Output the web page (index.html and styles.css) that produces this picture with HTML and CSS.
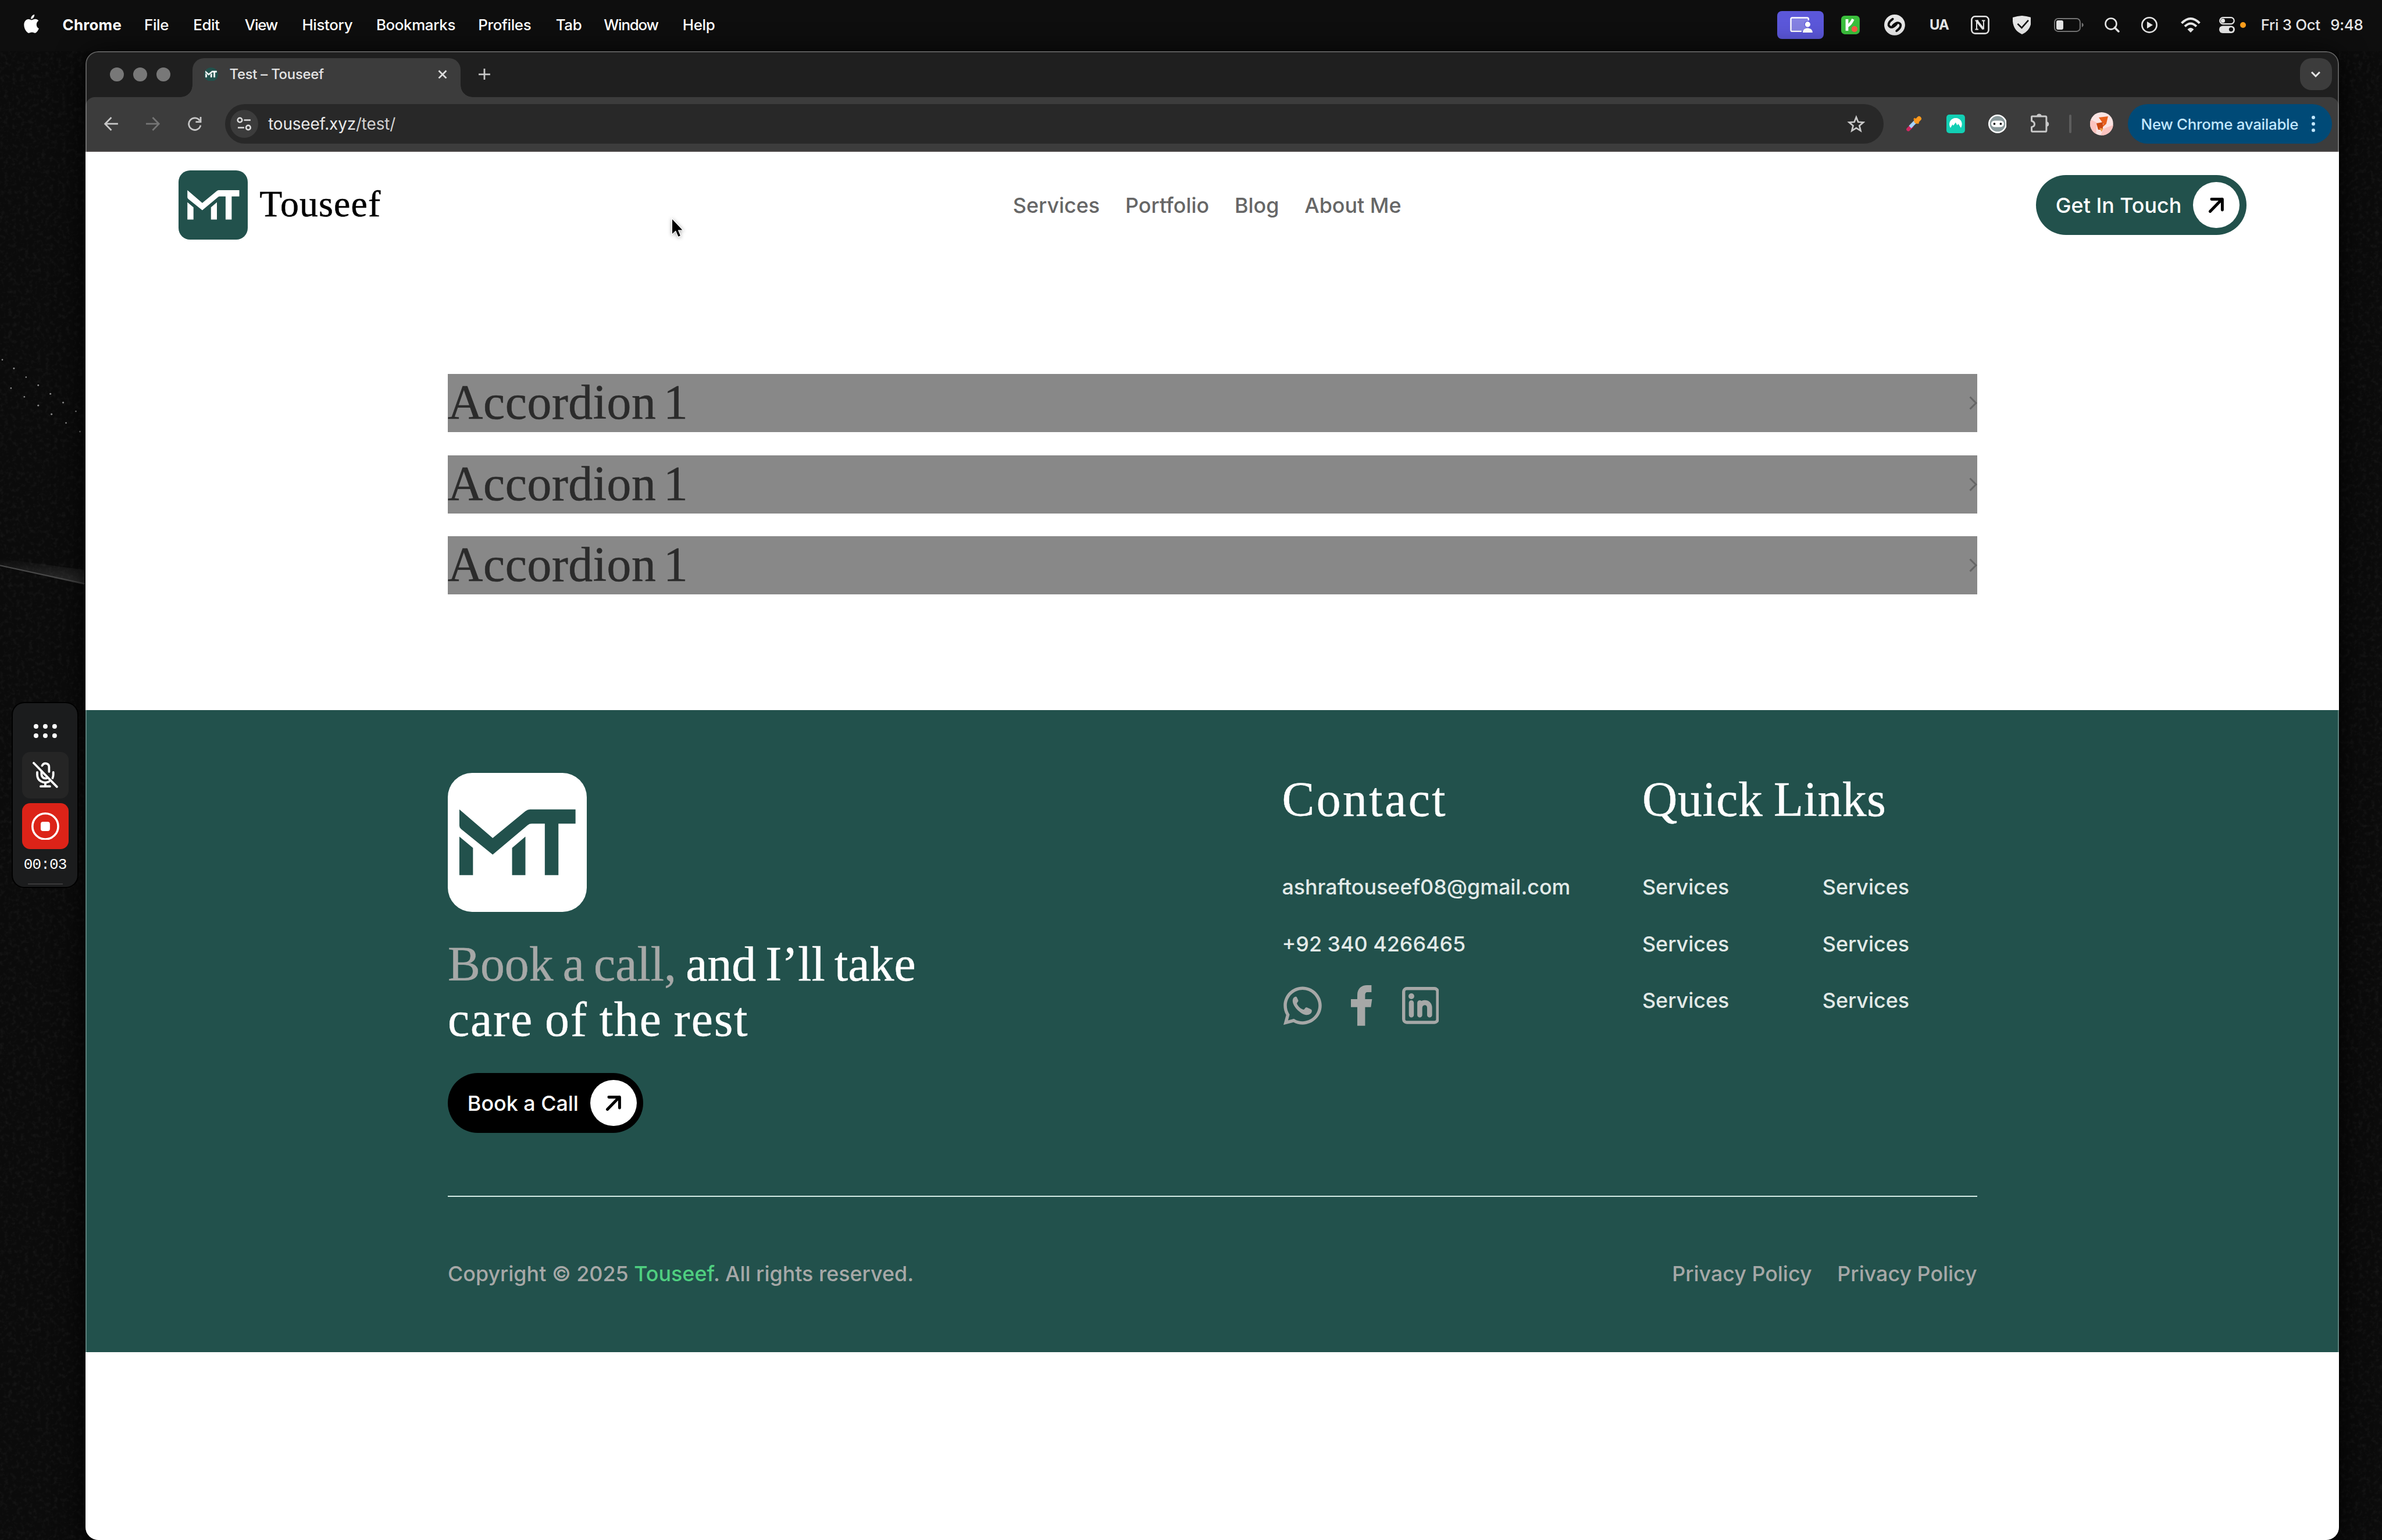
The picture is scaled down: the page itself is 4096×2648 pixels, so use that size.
FILE: index.html
```html
<!DOCTYPE html>
<html lang="en">
<head>
<meta charset="utf-8">
<title>Test – Touseef</title>
<link rel="stylesheet" href="styles.css">
</head>
<body>
<svg class="defs" width="0" height="0" aria-hidden="true">
  <symbol id="mt" viewBox="0 0 240 240">
    <path d="M20 63L77.5 112.500L134 66Q138 63 142 63H220.500V87.500H191V176.500H167.500V87.500H145Q141 87.500 138 90L77.500 141L23 97Q20 94 20 91Z"/>
    <path d="M20 110L43.500 129.500V176.500H20Z"/>
    <path d="M134 110V176.500H111V129.500Z"/>
  </symbol>
  <symbol id="arrow" viewBox="0 0 28 28">
    <path d="M3.500 24.500L24 3.500M6 3.500H24.500V22" fill="none" stroke="#000" stroke-width="5" stroke-linecap="round" stroke-linejoin="round"/>
  </symbol>
  <symbol id="chev" viewBox="0 0 14 24">
    <path d="M1.500 1.500L12 12L1.500 22.500" fill="none" stroke="#666" stroke-width="3"/>
  </symbol>
</svg>

<div class="desktop">
  <svg class="wallpaper" width="4112" height="2658" viewBox="0 0 4112 2658" aria-hidden="true">
    <defs>
      <filter id="grain" x="0" y="0" width="100%" height="100%">
        <feTurbulence type="fractalNoise" baseFrequency="0.14" numOctaves="3" seed="4"/>
        <feColorMatrix values="0 0 0 0 1  0 0 0 0 1  0 0 0 0 1  .9 0 0 0 -.42"/>
      </filter>
      <linearGradient id="ridge" x1="0" y1="0" x2="0" y2="1">
        <stop offset="0" stop-color="#fff" stop-opacity="0"/>
        <stop offset="1" stop-color="#fff" stop-opacity=".15"/>
      </linearGradient>
    </defs>
    <rect width="148" height="2570" y="88" filter="url(#grain)" opacity=".12"/>
    <rect width="74" height="2570" x="4038" y="88" filter="url(#grain)" opacity=".12"/>
    <path d="M0 964L148 984V1010L0 977Z" fill="url(#ridge)"/>
    <path d="M0 976L148 1008" stroke="#4a4a4a" stroke-width="2"/>
    <g fill="#8f8f8f">
      <circle cx="4" cy="621" r="1.300"/><circle cx="24" cy="636" r="1.500"/><circle cx="45" cy="651" r="1.300"/>
      <circle cx="66" cy="665" r="1.500"/><circle cx="87" cy="680" r="1.500"/><circle cx="109" cy="695" r="1.500"/>
      <circle cx="131" cy="710" r="1.300"/><circle cx="19" cy="670" r="1.300"/><circle cx="42" cy="685" r="1.300"/>
      <circle cx="66" cy="700" r="1.500"/><circle cx="89" cy="715" r="1.500"/><circle cx="114" cy="730" r="1.300"/>
      <circle cx="138" cy="745" r="1.300"/>
    </g>
  </svg>

  <header class="menubar">
    <nav class="menus">
      <svg class="apple" width="27" height="32" viewBox="0 0 27 32"><path fill="#fff" d="M18.300 0C18.500 2 17.700 4 16.500 5.400C15.300 6.800 13.800 7.600 12.200 7.500C12 5.500 12.900 3.700 14 2.400C15.200 1.100 16.900 .2 18.300 0ZM26 24.200C24.600 27.600 22 31.800 19.200 31.900C17.200 31.900 16.700 30.700 14 30.700C11.300 30.700 10.700 31.900 8.800 32C6 32 .3 25.500 .3 17.700C.3 11.800 4 8 7.900 8C10.300 8 12 9.500 13.700 9.500C15.200 9.500 17.200 7.900 20 7.900C21.900 7.900 24 8.900 25.400 10.700C20.200 13.700 21.100 21.900 26 24.200Z"/></svg>
      <b>Chrome</b><span>File</span><span>Edit</span><span class="tight">View</span><span>History</span><span>Bookmarks</span><span>Profiles</span><span>Tab</span><span class="tight">Window</span><span>Help</span>
    </nav>
    <div class="status">
      <span class="share"><svg width="40" height="28" viewBox="0 0 40 28"><rect x="2" y="2.500" width="30" height="22" rx="3" fill="#fff" fill-opacity=".25"/><path d="M20 25H4Q1.500 25 1.500 22.500V4Q1.500 1.500 4 1.500H29.500Q32 1.500 32 4V6" fill="none" stroke="#fff" stroke-width="2.400"/><circle cx="30.500" cy="13" r="5.200" fill="#fff" stroke="#5b57d9" stroke-width="1.200"/><path d="M22 27C22 22 26 19.500 30.500 19.500S39 22 39 27Z" fill="#fff"/></svg></span>
      <svg width="32" height="32" viewBox="0 0 32 32"><rect width="32" height="32" rx="6" fill="#3bbf3c"/><path d="M10 6V26" stroke="#fff" stroke-width="4.800"/><path d="M11 18Q17 14 20.500 6" fill="none" stroke="#fff" stroke-width="4.600"/><circle cx="23" cy="23" r="5.200" fill="#ff5a45"/></svg>
      <svg width="36" height="36" viewBox="0 0 36 36"><circle cx="18" cy="18" r="18" fill="#e6e6e6"/><path d="M15.500 7.500C8 12 6 17 9 20C13 24 19 19 21.500 16.500M20.500 28.500C28 24 30 19 27 16C23 12 17 17 14.500 19.500" transform="rotate(-4 18 18)" fill="none" stroke="#0e0e0e" stroke-width="3.800" stroke-linecap="round"/></svg>
      <b class="ua">UA</b>
      <svg width="32" height="32" viewBox="0 0 32 32"><rect x="1.300" y="1.300" width="29.400" height="29.400" rx="6" fill="none" stroke="#e6e6e6" stroke-width="2.600"/><path d="M7.500 8.500H13M19 8.500H24.500M7.500 23.500H13M10 8.500V23.500M22 8.500V23.500" stroke="#e6e6e6" stroke-width="2"/><path d="M10 8.500L21.500 23" stroke="#e6e6e6" stroke-width="4"/></svg>
      <svg width="32" height="32" viewBox="0 0 32 32"><path d="M0 3Q8 .5 16 0Q24 .5 32 3C33 17 28 27 16 32C4 27-1 17 0 3Z" fill="#e6e6e6"/><path d="M8.500 14L15.500 21L27 8" fill="none" stroke="#0e0e0e" stroke-width="2.600"/></svg>
      <svg width="52" height="24" viewBox="0 0 52 24"><rect x="1" y="1" width="44" height="22" rx="6" fill="none" stroke="#747474" stroke-width="2"/><rect x="4" y="4" width="12" height="16" rx="3" fill="#e6e6e6"/><path d="M48 8Q51 9.500 51 12T48 16Z" fill="#747474"/></svg>
      <svg width="26" height="26" viewBox="0 0 26 26"><circle cx="11" cy="11" r="9.500" fill="none" stroke="#e6e6e6" stroke-width="2.600"/><path d="M17.500 17.500L24 24" stroke="#e6e6e6" stroke-width="3.600" stroke-linecap="round"/></svg>
      <svg width="28" height="28" viewBox="0 0 28 28"><circle cx="14" cy="14" r="12.700" fill="none" stroke="#e6e6e6" stroke-width="2.600"/><path d="M10 8L20 14L10 20Z" fill="#e6e6e6"/></svg>
      <svg width="34" height="26" viewBox="0 0 34 26"><path d="M1.500 10Q17-6 32.500 10M7 15.500Q17 5.500 27 15.500" fill="none" stroke="#e6e6e6" stroke-width="4"/><path d="M11.500 20.500Q17 15 22.500 20.500L17 26Z" fill="#e6e6e6"/></svg>
      <svg width="27" height="28" viewBox="0 0 27 28"><rect x="1.200" y="1.200" width="24.600" height="11" rx="5.500" fill="none" stroke="#e6e6e6" stroke-width="2.200"/><circle cx="6.500" cy="6.700" r="3.600" fill="#e6e6e6"/><rect y="15.500" width="27" height="12.500" rx="6" fill="#e6e6e6"/><circle cx="20.500" cy="21.700" r="3.600" fill="#0e0e0e"/></svg>
      <i class="rec-dot"></i>
      <span>Fri 3 Oct</span><span>9:48</span>
    </div>
  </header>

  <main class="window">
    <div class="tabstrip">
      <div class="lights"><i></i><i></i><i></i></div>
      <div class="tab">
        <svg width="24" height="24" viewBox="0 0 24 24"><circle cx="12" cy="12" r="12" fill="#22514c"/><use href="#mt" x="0.500" y="0" width="23" height="23" fill="#fff" stroke="#fff" stroke-width="6"/></svg>
        <span>Test – Touseef</span>
        <svg class="close" width="16" height="16" viewBox="0 0 16 16"><path d="M1.500 1.500L14.500 14.500M14.500 1.500L1.500 14.500" stroke="#dcdcdc" stroke-width="2.800"/></svg>
      </div>
      <svg class="plus" width="20" height="20" viewBox="0 0 20 20"><path d="M10 0V20M0 10H20" stroke="#c8c8c8" stroke-width="2.800"/></svg>
      <button class="tabsearch"><svg width="18" height="12" viewBox="0 0 18 12"><path d="M2 2L9 9L16 2" fill="none" stroke="#e6e6e6" stroke-width="3"/></svg></button>
    </div>

    <div class="toolbar">
      <div class="history">
        <svg width="24" height="24" viewBox="0 0 24 24"><path d="M24 12H2M12.500 1L1.700 12L12.500 23" fill="none" stroke="#c8c8c8" stroke-width="2.800"/></svg>
        <svg width="24" height="24" viewBox="0 0 24 24"><path d="M0 12H22M11.500 1L22.300 12L11.500 23" fill="none" stroke="#757575" stroke-width="2.800"/></svg>
        <svg width="24" height="24" viewBox="0 0 24 24"><path d="M22 14.500A10.300 10.300 0 1 1 20.500 6.500" fill="none" stroke="#c8c8c8" stroke-width="2.800"/><path d="M23.500 0V10H13.500V7.200H20.700V0Z" fill="#c8c8c8"/></svg>
      </div>
      <div class="omnibox">
        <span class="tune"><svg width="26" height="24" viewBox="0 0 26 24"><g fill="none" stroke="#dedede" stroke-width="2.600"><circle cx="5.500" cy="5.500" r="3.800"/><path d="M12.500 5.500H24M2 18.500H13"/><circle cx="20" cy="18.500" r="3.800"/></g></svg></span>
        <span class="url">touseef.xyz<em>/test/</em></span>
        <svg class="star" width="32" height="31" viewBox="0 0 32 31"><path d="M16 3.500L19.300 11.800L28.300 12.400L21.400 18.200L23.600 27L16 22.200L8.400 27L10.600 18.200L3.700 12.400L12.700 11.800Z" fill="none" stroke="#c8c8c8" stroke-width="2.700"/></svg>
      </div>
      <div class="extensions">
        <svg width="28" height="28" viewBox="0 0 28 28"><path d="M4.500 23.500L10 18" stroke="#cf2760" stroke-width="6.500" stroke-linecap="round"/><path d="M7.500 19.500L17 10" stroke="#a5d3ff" stroke-width="6"/><path d="M15.500 6L21 12" stroke="#f18a12" stroke-width="4" stroke-linecap="round"/><path d="M18.500 9.500L23 5" stroke="#ff9a1e" stroke-width="8" stroke-linecap="round"/></svg>
        <svg width="32" height="32" viewBox="0 0 32 32"><rect width="32" height="32" rx="5" fill="#12cfb4"/><path d="M7 23C2 14 8 6 16 6S30 14 25 23L20.500 16L18.500 18.500L16 13.500L12 19L10.500 17Z" fill="#fff"/></svg>
        <svg width="32" height="32" viewBox="0 0 32 32"><circle cx="16" cy="16" r="14.700" fill="#8a999b" stroke="#fff" stroke-width="2.600"/><rect x="5" y="10.500" width="22" height="11" rx="5.500" fill="#fff"/><circle cx="10.500" cy="16" r="1.900" fill="#111"/><circle cx="21.500" cy="16" r="1.900" fill="#111"/></svg>
        <svg width="32" height="33" viewBox="0 0 32 33"><path d="M1.500 6Q1.500 5 3 5H25Q27 5 27 7V29Q27 31.500 25 31.500H3Q1.500 31.500 1.500 30V23.500Q6.500 22.500 6.500 18.500T1.500 13Z" fill="none" stroke="#c8c8c8" stroke-width="3" stroke-linejoin="round"/><path d="M10.500 5A4 4 0 0 1 18.500 5ZM27 14.500A4 4 0 0 1 27 22.500Z" fill="#c8c8c8" stroke="#c8c8c8"/></svg>
        <i class="sep"></i>
        <svg width="40" height="40" viewBox="0 0 40 40"><clipPath id="av"><circle cx="20" cy="20" r="20"/></clipPath><g clip-path="url(#av)"><rect width="40" height="40" fill="#fbe3e2"/><path d="M0 12L12 18L10 40H0ZM24 28L40 22V40H18Z" fill="#fbc3bf"/><path d="M15 9L31 7L28 20L20 27L23 20Z" fill="#e85f1c"/><path d="M11 19L22 17L22 30L14 30Z" fill="#c8460f"/><path d="M16 27L23 28L20 34Z" fill="#f0a050"/></g></svg>
        <span class="update">New Chrome available<svg width="6" height="28" viewBox="0 0 6 28"><g fill="#c2e7ff"><circle cx="3" cy="3" r="3"/><circle cx="3" cy="14" r="3"/><circle cx="3" cy="25" r="3"/></g></svg></span>
      </div>
    </div>

    <div class="page">
      <div class="site-header">
        <a class="brand"><span class="logo"><svg viewBox="0 0 240 240" width="120" height="120"><use href="#mt" width="240" height="240" fill="#fff" transform="translate(120 119) scale(.894) translate(-120 -120)"/></svg></span><span class="brand-name">Touseef</span></a>
        <nav class="site-nav"><a>Services</a><a>Portfolio</a><a>Blog</a><a>About Me</a></nav>
        <a class="cta"><span>Get In Touch</span><i><svg width="28" height="28"><use href="#arrow"/></svg></i></a>
      </div>

      <section class="accordions">
        <div class="accordion"><span>Accordion 1</span><svg width="14" height="24"><use href="#chev"/></svg></div>
        <div class="accordion"><span>Accordion 1</span><svg width="14" height="24"><use href="#chev"/></svg></div>
        <div class="accordion"><span>Accordion 1</span><svg width="14" height="24"><use href="#chev"/></svg></div>
      </section>

      <footer class="site-footer">
        <div class="footer-main">
          <div class="pitch">
            <span class="logo-large"><svg width="240" height="240"><use href="#mt" fill="#22514c"/></svg></span>
            <h2><span class="line one"><em>Book a call,</em> and I’ll take</span><span class="line two">care of the rest</span></h2>
            <a class="cta dark"><span>Book a Call</span><i><svg width="28" height="28"><use href="#arrow"/></svg></i></a>
          </div>
          <div class="col">
            <h3 class="contact">Contact</h3>
            <div class="rows"><a>ashraftouseef08@gmail.com</a><a>+92 340 4266465</a></div>
            <div class="social">
              <svg width="66" height="67" viewBox="0 0 66 66"><path transform="scale(.1473) translate(0 -32)" fill="#a6a8a7" fill-rule="evenodd" d="M380.900 97.100C339 55.100 283.200 32 223.900 32c-122.400 0-222 99.600-222 222 0 39.100 10.200 77.300 29.600 111L0 480l117.700-30.900c32.400 17.700 68.900 27 106.100 27h.1c122.300 0 224.100-99.600 224.100-222 0-59.300-25.200-115-67.100-157zM223.900 438.700c-33.200 0-65.700-8.900-94-25.700l-6.700-4-69.800 18.300L72 359.200l-4.400-7c-18.500-29.400-28.200-63.300-28.200-98.200 0-101.700 82.800-184.500 184.600-184.500 49.300 0 95.600 19.200 130.400 54.100 34.800 34.900 56.200 81.200 56.100 130.500 0 101.800-84.900 184.600-186.600 184.600z"/><path fill="#a6a8a7" d="M20 17.500C17 18.500 15.500 22 16 26C17 35 30 48 40 49C45 49 49 46 49 42C49 40 48 39.500 46 38.500L41 36.200C39 35.500 38 36.200 37 37.600C35.500 40 34.500 40 32.500 39C28.500 37 25 33.500 23.500 30C22.700 28.500 24 27.500 25.200 25.700C25.800 24.700 25.500 23.800 25.200 22.800L23 18.300C22.300 17 21.500 17.200 20 17.500Z"/></svg>
              <svg width="37" height="70" viewBox="0 0 37 70"><path fill="#a6a8a7" d="M11 70V38H0V24H11V17C11 6 18 0 28 0H35.500V12H29C25.500 12 24.500 14 24.500 17.500V24H36.500L34.500 38H24.500V70Z"/></svg>
              <svg width="64" height="64" viewBox="0 0 64 64"><rect x="2.700" y="2.700" width="58.600" height="58.600" rx="5.500" fill="none" stroke="#a6a8a7" stroke-width="5.400"/><circle cx="16" cy="16" r="5" fill="#a6a8a7"/><path d="M16 27.500V48.500M30.500 27.500V48.500M30.500 37C30.500 24 47.500 24 47.500 36V48.500" fill="none" stroke="#a6a8a7" stroke-width="8.600" stroke-linecap="round"/></svg>
            </div>
          </div>
          <div class="col">
            <h3 class="quick">Quick Links</h3>
            <div class="links"><a>Services</a><a>Services</a><a>Services</a><a>Services</a><a>Services</a><a>Services</a></div>
          </div>
        </div>
        <div class="footer-bottom">
          <span>Copyright © 2025 <b>Touseef</b>. All rights reserved.</span>
          <span class="legal"><a>Privacy Policy</a><a>Privacy Policy</a></span>
        </div>
      </footer>
    </div>
  </main>

  <aside class="recorder">
    <svg width="40" height="24" viewBox="0 0 40 24"><g fill="#fff"><circle cx="4" cy="4" r="4"/><circle cx="20" cy="4" r="4"/><circle cx="36" cy="4" r="4"/><circle cx="4" cy="20" r="4"/><circle cx="20" cy="20" r="4"/><circle cx="36" cy="20" r="4"/></g></svg>
    <span class="tile"><svg width="44" height="46" viewBox="0 0 44 46"><g fill="none" stroke="#fff" stroke-width="3.800" stroke-linecap="round"><path d="M2 2L42 43"/><path d="M16.500 6.500C19.500 .5 28.500 2 28.500 9V17"/><path d="M8 18V22C8 33 19 38.500 28.500 34M35.800 18V22Q35.800 25 34.500 28"/><path d="M15.500 16V22C16 27 20 29.500 24.500 28.200"/><path d="M22 37V42M14 42.300H30"/></g></svg></span>
    <span class="tile stop"><svg width="48" height="48" viewBox="0 0 48 48"><circle cx="24" cy="24" r="22.200" fill="none" stroke="#fff" stroke-width="3.600"/><rect x="16" y="16" width="16" height="16" rx="4" fill="#fff"/></svg></span>
    <span class="timer">00:03</span>
    <i class="grip"></i>
  </aside>

  <svg class="cursor" width="28" height="42" viewBox="-3 -3 28 42"><path d="M1 1V26L7 20.500L11.500 31L15 29.500L10.800 19.500H18.500Z" fill="#000" stroke="#fff" stroke-width="2.400" paint-order="stroke"/></svg>
</div>
</body>
</html>
```
FILE: styles.css
```css
* { box-sizing: border-box; margin: 0; padding: 0; }
html { background: #0b0b0b; overflow: hidden; }
body { overflow: hidden; font-family: Inter, sans-serif; font-weight: 500; }
svg { display: block; flex: none; }
em, i { font-style: normal; }
.defs { position: absolute; }

/* laid out on a 4112px canvas, fitted to the 4096px viewport */
.desktop {
  position: relative;
  width: 4112px;
  height: 2658px;
  zoom: 0.99611;
  background: #0b0b0b;
  overflow: hidden;
  display: flex;
  flex-direction: column;
}
.wallpaper { position: absolute; left: 0; top: 0; }

/* menu bar */
.menubar {
  height: 88px;
  flex: none;
  display: flex;
  justify-content: space-between;
  align-items: center;
  padding: 0 32px 2px 41px;
  color: #fff;
  background: #0e0e0e;
  font-size: 26px;
  letter-spacing: -0.35px;
  position: relative;
}
.menus {
  display: grid;
  grid-template-columns: 67px 141px 84.5px 89px 99px 128px 176px 134px 83px 136px 60px;
  align-items: center;
}
.menus b { font-weight: 700; letter-spacing: 0.25px; }
.apple { margin-top: -4px; }
.tight { letter-spacing: -1.2px; }
.status {
  display: grid;
  grid-template-columns: 110px 75px 78px 71px 72px 72px 87px 63px 69px 66px 36px 36px 120px 57px;
  align-items: center;
  color: #e6e6e6;
}
.status > span { white-space: nowrap; }
.share {
  width: 80px; height: 48px; border-radius: 8px; background: #5b57d9;
  display: flex; align-items: center; justify-content: center; padding-left: 4px;
}
.ua { font-size: 24px; font-weight: 700; letter-spacing: -1px; }
.rec-dot { width: 10px; height: 10px; border-radius: 50%; background: #ff9f1c; }

/* browser window */
.window {
  position: relative;
  width: 3890px;
  height: 2570px;
  margin-left: 148px;
  border-radius: 22px;
  overflow: hidden;
  background: #1f1f1f;
  box-shadow: 0 0 0 1px #000, 0 10px 50px #000;
  display: flex;
  flex-direction: column;
}
.window::after {
  content: "";
  position: absolute;
  inset: 0;
  border: 2.02px solid rgba(255, 255, 255, 0.28);
  border-radius: 22px;
}
.tabstrip {
  height: 80px;
  flex: none;
  display: flex;
  align-items: center;
  padding: 0 12px 0 42px;
}
.lights { display: flex; gap: 16px; width: 142px; padding-top: 1px; }
.lights i { width: 24px; height: 24px; border-radius: 50%; background: #787878; }
.tab {
  position: relative;
  align-self: flex-end;
  width: 463px;
  height: 68px;
  background: #3c3c3c;
  border-radius: 20px 20px 0 0;
  display: flex;
  align-items: center;
  padding: 0 23px 12px 20px;
  font-size: 24px;
  letter-spacing: -0.25px;
  color: #e3e3e3;
}
.tab span { margin-left: 20px; }
.tab .close { margin-left: auto; }
.tab::before, .tab::after {
  content: "";
  position: absolute;
  bottom: 0;
  width: 20px;
  height: 20px;
}
.tab::before { left: -20px; background: radial-gradient(circle at 0 0, transparent 19.5px, #3c3c3c 20px); }
.tab::after { right: -20px; background: radial-gradient(circle at 100% 0, transparent 19.5px, #3c3c3c 20px); }
.plus { margin-left: 31px; }
.tabsearch {
  margin-left: auto;
  width: 56px; height: 56px; border: 0; border-radius: 20px; background: #3c3c3c;
  display: flex; align-items: center; justify-content: center;
}
.toolbar {
  height: 94px;
  flex: none;
  background: #3c3c3c;
  border-bottom: 2.02px solid #4a4646;
  border-radius: 16px 16px 0 0;
  display: flex;
  align-items: center;
  padding: 0 12px 0 32px;
}
.history { display: flex; gap: 48px; width: 209px; }
.omnibox {
  width: 2863px;
  height: 68px;
  border-radius: 34px;
  background: #282828;
  display: flex;
  align-items: center;
  padding: 0 32px 0 9px;
}
.tune { width: 48px; height: 48px; border-radius: 50%; background: #3c3c3c; display: flex; align-items: center; justify-content: center; }
.url { margin-left: 17px; font-size: 28px; font-weight: 400; letter-spacing: -0.14px; color: #e8e8e8; }
.url em { color: #d2d2d2; }
.star { margin-left: auto; }
.extensions { display: flex; align-items: center; flex: 1; }
.extensions svg:nth-of-type(1) { margin-left: 38px; }
.extensions svg:nth-of-type(2) { margin-left: 42px; }
.extensions svg:nth-of-type(3) { margin-left: 40px; }
.extensions svg:nth-of-type(4) { margin: -4px 0 0 42px; }
.sep { width: 4px; height: 32px; border-radius: 2px; background: #5d5d5d; margin-left: 34px; }
.extensions svg:nth-of-type(5) { margin-left: 32px; }
.update {
  margin-left: auto;
  width: 353px;
  height: 68px;
  border-radius: 34px;
  background: #004a77;
  color: #c2e7ff;
  font-size: 26px;
  letter-spacing: -0.3px;
  white-space: nowrap;
  display: flex;
  align-items: center;
  justify-content: space-between;
  padding: 0 29px 0 23px;
}
.extensions .update svg { margin: 0; }

/* web page */
.page { flex: 1; background: #fff; display: flex; flex-direction: column; font-size: 36px; }
.site-header {
  display: flex;
  align-items: center;
  justify-content: space-between;
  height: 184px;
  padding: 0 160px;
}
.brand { display: flex; align-items: center; width: 345px; gap: 20px; }
.logo { width: 120px; height: 120px; border-radius: 20px; background: #22514c; }
.brand-name {
  font: 400 64px "Liberation Serif", serif;
  letter-spacing: 1.2px;
  padding-bottom: 4px;
  color: #000;
  -webkit-text-stroke: 0.5px currentColor;
}
.site-nav { display: flex; gap: 44px; color: #666; }
.cta {
  display: inline-flex;
  align-items: center;
  gap: 20px;
  height: 104px;
  padding: 0 12px 0 34px;
  border-radius: 52px;
  background: #22514c;
  color: #fff;
}
.cta i { width: 80px; height: 80px; border-radius: 50%; background: #fff; display: flex; align-items: center; justify-content: center; }
.dark { background: #000; }

.accordions { display: flex; flex-direction: column; gap: 40px; margin: 200px 625px; }
.accordion {
  height: 100px;
  background: #888;
  color: #2b2b2b;
  display: flex;
  align-items: center;
  justify-content: space-between;
  font: 400 84px/92px "Liberation Serif", serif;
  letter-spacing: 0.6px;
  word-spacing: -9px;
}
.accordion span { margin-top: -2px; -webkit-text-stroke: 0.6px currentColor; }

.site-footer { height: 1108px; padding: 108px 625px 0; background: #22514c; color: #fff; }
.footer-main { display: grid; grid-template-columns: 1440px 622px 578px; height: 732px; align-items: start; border-bottom: 2.02px solid #d5ece6; }
.logo-large { display: block; width: 240px; height: 240px; border-radius: 42px; background: #fff; }
.pitch h2, .col h3 { -webkit-text-stroke: 0.5px currentColor; }
.pitch h2 { font: 400 84px/95.5px "Liberation Serif", serif; margin: 42px 0 45px; }
.line { display: block; white-space: nowrap; }
.one { letter-spacing: 0.1px; word-spacing: -5px; }
.two { letter-spacing: 2px; word-spacing: -3px; }
.one em { color: #a6a8a7; }
.col h3 { font: 400 84px/92px "Liberation Serif", serif; margin-bottom: 77px; white-space: nowrap; }
.contact { letter-spacing: 3.5px; }
.quick { letter-spacing: 0.6px; word-spacing: -3px; }
.rows { display: flex; flex-direction: column; gap: 40px; line-height: 58px; color: #e2eae8; }
.rows a, .links a { display: block; white-space: nowrap; }
.social { display: flex; align-items: center; margin: 42px 0 0 3px; }
.social svg:nth-child(2) { margin-left: 50px; }
.social svg:nth-child(3) { margin-left: 51px; }
.links { display: grid; grid-template-columns: 311px 267px; row-gap: 40px; line-height: 58px; color: #e2eae8; }
.footer-bottom {
  height: 268px;
  display: flex;
  align-items: center;
  justify-content: space-between;
  padding-bottom: 2px;
  color: #a6a8a7;
}
.footer-bottom b { font-weight: 500; color: #4fcf80; }
.legal { display: flex; gap: 44px; }

/* floating screen recorder */
.recorder {
  position: absolute;
  left: 22px;
  top: 1214px;
  width: 112px;
  height: 317px;
  border-radius: 20px;
  background: #1b1c1d;
  box-shadow: 0 0 0 2px #000;
  display: flex;
  flex-direction: column;
  align-items: center;
  padding-top: 36px;
}
.tile { width: 80px; height: 80px; border-radius: 14px; background: #252525; display: flex; align-items: center; justify-content: center; margin-top: 24px; }
.stop { margin-top: 8px; background: #dc2318; }
.timer { margin-top: 12px; font: 26px/32px "Liberation Mono", monospace; letter-spacing: -0.8px; color: #fff; }
.grip { width: 60px; height: 2px; background: #3a3a3a; margin-top: 15px; }

.cursor { position: absolute; left: 1157px; top: 374px; filter: drop-shadow(0 2px 3px rgba(0, 0, 0, 0.35)); }
```
